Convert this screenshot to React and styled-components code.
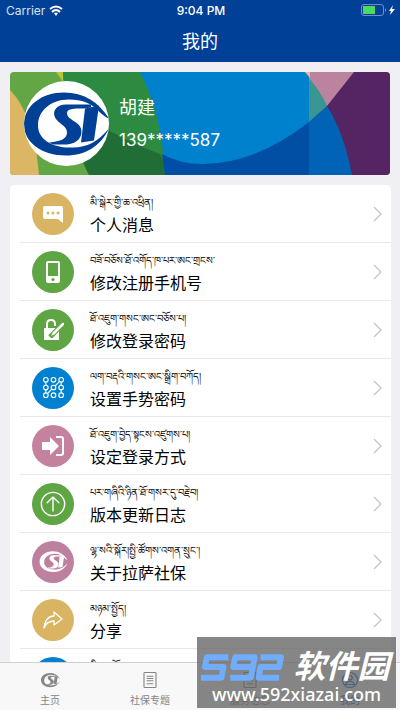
import React from 'react';
import styled, { createGlobalStyle } from 'styled-components';

const Global = createGlobalStyle`
  * { box-sizing: border-box; }
  body { margin: 0; background: #efeff4; font-family: Inter, "Noto Sans CJK SC", sans-serif; }
`;

const PlainButton = styled.button.attrs({ type: 'button' })`
  font-family: inherit;
  border: 0;
  padding: 0;
  background: none;
  color: inherit;
  cursor: pointer;
`;

const Page = styled.div`
  position: relative;
  display: flex;
  flex-direction: column;
  height: 100vh;
  overflow: hidden;
`;

const Header = styled.header`
  flex: none;
  height: 62px;
  background: #004097;
  color: #fff;
`;

const StatusBar = styled.div`
  display: grid;
  grid-template-columns: 1fr auto 1fr;
  align-items: center;
  height: 20px;
  padding: 0 4px 0 6px;
  font-size: 12px;
`;

const StatusSide = styled.div`
  display: flex;
  align-items: center;
  gap: 4px;
  color: #d9e3f0;
  justify-content: ${(p) => (p.$end ? 'flex-end' : 'flex-start')};
`;

const Clock = styled.time`
  font-weight: 500;
`;

const Title = styled.h1`
  margin: 0;
  font-size: 18px;
  line-height: 43px;
  font-weight: 400;
  text-align: center;
`;

const Main = styled.main`
  flex: 1;
  min-height: 0;
  overflow: hidden;
  padding: 10px 9px 0 10px;
`;

const Profile = styled.section`
  position: relative;
  display: flex;
  align-items: center;
  gap: 10px;
  height: 103px;
  margin-right: 1px;
  padding-left: 14px;
  border-radius: 4px;
  overflow: hidden;
  color: #fff;
`;

const Backdrop = styled.svg`
  position: absolute;
  inset: 0;
  width: 100%;
  height: 100%;
`;

const Avatar = styled.div`
  position: relative;
  width: 85px;
  height: 85px;
  border-radius: 50%;
  background: #fff;
  overflow: hidden;
  color: #004097;
  svg { display: block; }
`;

const Person = styled.div`
  position: relative;
  line-height: 32px;
`;

const Name = styled.div`
  font-size: 18px;
`;

const PhoneNumber = styled.div`
  font-size: 17px;
`;

const List = styled.ul`
  list-style: none;
  margin: 10px 0 0;
  padding: 0 0 0 10px;
  border-radius: 4px;
  background: #fff;
`;

const Item = styled.li`
  border-bottom: 1px solid #e8e8ea;
`;

const Row = styled(PlainButton)`
  display: flex;
  align-items: center;
  width: 100%;
  height: 57px;
  padding: 0 8px 0 12px;
  text-align: left;
`;

const Disc = styled.span`
  flex: none;
  display: grid;
  place-items: center;
  width: 42px;
  height: 42px;
  border-radius: 50%;
  background: ${(p) => p.$color};
  color: #fff;
`;

const Labels = styled.span`
  flex: 1;
  min-width: 0;
  margin-left: 16px;
  padding-top: 3px;
  color: #000;
`;

const Tibetan = styled.span`
  display: block;
  height: 20px;
  font-size: 10px;
  line-height: 20px;
  white-space: nowrap;
`;

const Chinese = styled.span`
  display: block;
  font-size: 16px;
  line-height: 26px;
`;

const TabBar = styled.nav`
  flex: none;
  display: grid;
  grid-template-columns: repeat(4, 1fr);
  height: 48px;
  background: #f8f8f8;
  border-top: 1px solid #d0d0d2;
`;

const Tab = styled(PlainButton)`
  display: flex;
  flex-direction: column;
  align-items: center;
  gap: 3px;
  padding-top: 8px;
  color: ${(p) => (p.$active ? '#0060c8' : '#858585')};
  font-size: 10px;
  line-height: 16px;
`;

const Watermark = styled.aside`
  position: absolute;
  right: 4px;
  bottom: 2px;
  display: flex;
  flex-direction: column;
  align-items: center;
  width: 199px;
  height: 71px;
  padding-top: 12px;
  background: rgba(96, 96, 96, 0.76);
  color: #fff;
`;

const Brand = styled.div`
  display: flex;
  align-items: center;
  gap: 8px;
  height: 35px;
  padding-right: 4px;
`;

const BrandText = styled.strong`
  font-size: 32px;
  line-height: 34px;
  font-weight: 700;
  font-style: italic;
`;

const Site = styled.div`
  font-family: "Noto Sans", sans-serif;
  font-size: 18px;
  line-height: 20px;
  font-weight: 500;
`;

function Logo({ width, height }) {
  return (
    <svg width={width} height={height} viewBox="0 0 85 64" fill="currentColor" aria-hidden="true">
      <path d="M85 27C74 10 60 1 40 1C18 1 0 14 0 33C0 51 18 64 42 64C62 64 77 54 85 37C74 50 63 56 49 56C27 57 14 47 14 34C14 19 27 8 45 8C58 8 67 12 73 18C78 23 82 26 85 27Z" />
      <path d="M67 13H42C33 13 28 19 31 26C34 32 43 34 43 41C43 47 37 50 25 51L29 53H43C54 52 59 45 57 37C55 30 43 28 43 22C43 17 49 17 60 17L67 16Z" />
      <path d="M61 17L75 14L70 49L57 51Z" />
    </svg>
  );
}

const Stroke = ({ size = 24, w = 1.5, children }) => (
  <svg width={size} height={size} viewBox="0 0 24 24" fill="none" stroke="currentColor" strokeWidth={w} strokeLinejoin="round" strokeLinecap="round" aria-hidden="true">{children}</svg>
);

const Chat = () => (
  <svg width="22" height="20" viewBox="0 0 22 20" aria-hidden="true">
    <path fill="#fff" d="M3 2H19Q21 2 21 4V19L16 15H3Q1 15 1 13V4Q1 2 3 2Z" />
    <g fill="#d9b563"><circle cx="6" cy="9" r="1.5" /><circle cx="11" cy="9" r="1.5" /><circle cx="16" cy="9" r="1.5" /></g>
  </svg>
);

const Phone = () => (
  <svg width="16" height="24" viewBox="0 0 16 24" aria-hidden="true">
    <rect x="1" y="1" width="14" height="22" rx="2" fill="#fff" />
    <path fill="#5fa543" d="M3 3H13V16H3Z" /><circle cx="8" cy="19.5" r="1.6" fill="#5fa543" />
  </svg>
);

const Lock = () => (
  <svg width="22" height="24" viewBox="0 0 22 24" aria-hidden="true">
    <path d="M5 11V6Q5 2 9 2Q13 2 13 6V8" fill="none" stroke="#fff" strokeWidth="2" />
    <rect x="2" y="10" width="15" height="12" rx="1" fill="#fff" />
    <path d="M21 6L11 16L8 19" stroke="#5fa543" strokeWidth="5" />
    <path d="M21 6L12 15" stroke="#fff" strokeWidth="2.5" strokeLinecap="round" />
    <path d="M11 14L13 16L9 18Z" fill="#fff" />
    <path d="M2 20V21Q2 22 3 22H16Q17 22 17 21V20Z" fill="#fff" />
  </svg>
);

const Gesture = () => (
  <Stroke size={23} w={1.2}>
    {[4, 12, 20].flatMap((y) => [4, 12, 20].map((x) => <circle key={`${x}-${y}`} cx={x} cy={y} r="2.4" />))}
    <path d="M4 7V9M4 15V17M6 18L10 14M14 10L18 6M20 7V9M20 15V17" />
  </Stroke>
);

const Enter = () => (
  <svg width="24" height="22" viewBox="0 0 24 22" aria-hidden="true">
    <path fill="#fff" d="M1 7H9V2L18 11L9 20V15H1Z" />
    <path d="M15 2H20Q22 2 22 4V18Q22 20 20 20H15" fill="none" stroke="#fff" strokeWidth="2" />
  </svg>
);

const Update = () => <Stroke size={28} w={1.2}><circle cx="12" cy="12" r="10" /><path d="M12 18V6M7 11L12 6L17 11" /></Stroke>;
const Share = () => <Stroke size={24} w={1.3}><path d="M3 20C4 12 7 8 13 8V4L21 11L13 17V13C8 13 5 15 3 20Z" /></Stroke>;
const Doc = () => <Stroke size={18} w={1.5}><rect x="4" y="2" width="16" height="20" rx="1" /><path d="M8 7H16M8 10H16M8 13H16M8 17H16" /></Stroke>;
const Me = () => <Stroke size={18} w={1.5}><circle cx="12" cy="12" r="10" /><circle cx="12" cy="9" r="3" /><path d="M6 18Q7 14 12 14Q17 14 18 18Z" /></Stroke>;

const Chevron = () => (
  <svg width="10" height="16" viewBox="0 0 10 16" fill="none" stroke="#c5c5c9" strokeWidth="1.3" aria-hidden="true"><path d="M1 1L8 8L1 15" /></svg>
);

const Wifi = () => (
  <svg width="14" height="11" viewBox="0 0 14 11" fill="none" stroke="#fff" strokeWidth="2" aria-label="Wi-Fi">
    <path d="M1 4Q7 -1 13 4M3 7Q7 3 11 7" /><path d="M7 11L5 8Q7 7 9 8Z" fill="#fff" stroke="none" />
  </svg>
);

const Battery = () => (
  <svg width="35" height="12" viewBox="0 0 35 12" aria-label="Battery charging">
    <rect x="0.5" y="0.5" width="22" height="11" rx="2.5" fill="none" stroke="#6d8fc0" />
    <path fill="#4cd964" d="M2 2H14V10H2Z" /><path fill="#6d8fc0" d="M24 4Q26 6 24 8Z" />
    <path fill="#fff" d="M32 1L28 7H30L29 11L34 5H31Z" />
  </svg>
);

const Digits592 = () => (
  <svg width="86" height="30" viewBox="0 0 88 30" fill="none" stroke="#70adff" strokeWidth="6" strokeLinejoin="round" role="img" aria-label="592">
    <path d="M30 5H8L6 15H25L23 26H2M56 15H35L37 5H57L53 26H32M63 5H84L82 15H63L61 26H82" />
  </svg>
);

const rows = [
  { bo: 'མི་སྒེར་གྱི་ཆ་འཕྲིན།', zh: '个人消息', color: '#d9b563', icon: <Chat /> },
  { bo: 'བཟོ་བཅོས་ཐོ་འགོད་ཁ་པར་ཨང་གྲངས་', zh: '修改注册手机号', color: '#5fa543', icon: <Phone /> },
  { bo: 'ཐོ་འཇུག་གསང་ཨང་བཅོས་པ།', zh: '修改登录密码', color: '#5fa543', icon: <Lock /> },
  { bo: 'ལག་བརྡའི་གསང་ཨང་སྒྲིག་བཀོད།', zh: '设置手势密码', color: '#0080d0', icon: <Gesture /> },
  { bo: 'ཐོ་འཇུག་བྱེད་སྟངས་འཛུགས་པ།', zh: '设定登录方式', color: '#c5829f', icon: <Enter /> },
  { bo: 'པར་གཞིའི་ཉིན་ཐོ་གསར་དུ་བརྗེ་བ།', zh: '版本更新日志', color: '#5fa543', icon: <Update /> },
  { bo: 'ལྷ་སའི་སྐོར།སྤྱི་ཚོགས་འགན་སྲུང་།', zh: '关于拉萨社保', color: '#bd819f', icon: <Logo width={29} height={21} /> },
  { bo: 'མཉམ་སྤྱོད།', zh: '分享', color: '#d9b563', icon: <Share /> },
  { bo: 'སྒྲིག་འགོད།', zh: '设置', color: '#0080d0', icon: null },
];

const tabs = [
  { label: '主页', icon: <Logo width={19} height={18} /> },
  { label: '社保专题', icon: <Doc /> },
  { label: '服务信息', icon: <Doc /> },
  { label: '我的', icon: <Me />, active: true },
];

export default function App() {
  return (
    <Page>
      <Global />
      <Header>
        <StatusBar>
          <StatusSide>Carrier <Wifi /></StatusSide>
          <Clock>9:04 PM</Clock>
          <StatusSide $end><Battery /></StatusSide>
        </StatusBar>
        <Title>我的</Title>
      </Header>
      <Main>
        <Profile>
          <Backdrop viewBox="0 0 380 103" preserveAspectRatio="none" aria-hidden="true">
            <path fill="#63a646" d="M0 0H380V103H0Z" />
            <path fill="#dbb765" d="M0 18Q24 42 29 103H0Z" />
            <path fill="#b5c53c" d="M46 0H56V14Z" />
            <path fill="#2c8b40" d="M53 0H160V103H79Q53 54 53 0Z" />
            <path fill="#206d36" d="M79 103Q66 78 61 30Q91 60 150 82L160 103Z" />
            <path fill="#0081ce" d="M130 0H300V103H155Q152 42 130 0Z" />
            <path fill="#004fa4" d="M152 82Q170 92 193 92Q245 92 299 50V103H155Z" />
            <path fill="#542562" d="M299 0H380V103H299Z" />
            <path fill="#bc839f" d="M299 0H344L317 34L299 15Z" />
            <path fill="#0063b5" d="M299 50L317 34Q334 61 342 103H299Z" />
            <path fill="#389792" d="M299 6Q311 20 317 34L299 50Z" />
            <path fill="#f2b698" d="M295 0H300V6Z" />
          </Backdrop>
          <Avatar><Logo width={85} height={85} /></Avatar>
          <Person><Name>胡建</Name><PhoneNumber>139*****587</PhoneNumber></Person>
        </Profile>
        <List>
          {rows.map((r) => (
            <Item key={r.zh}>
              <Row>
                <Disc $color={r.color}>{r.icon}</Disc>
                <Labels><Tibetan lang="bo">{r.bo}</Tibetan><Chinese>{r.zh}</Chinese></Labels>
                <Chevron />
              </Row>
            </Item>
          ))}
        </List>
      </Main>
      <TabBar>
        {tabs.map((t) => <Tab key={t.label} $active={t.active}>{t.icon}<span>{t.label}</span></Tab>)}
      </TabBar>
      <Watermark>
        <Brand><Digits592 /><BrandText>软件园</BrandText></Brand>
        <Site>www.592xiazai.com</Site>
      </Watermark>
    </Page>
  );
}
